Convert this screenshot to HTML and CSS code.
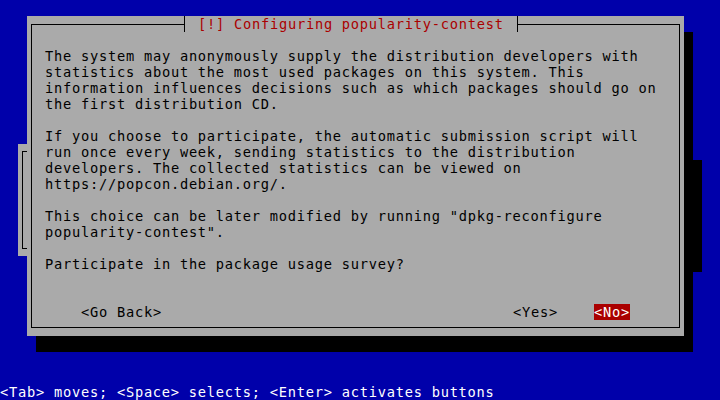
FILE: index.html
```html
<!DOCTYPE html>
<html lang="en">
<head>
<meta charset="utf-8">
<title>Configuring popularity-contest</title>
<link rel="stylesheet" href="styles.css">
</head>
<body>
<div class="screen">
  <div class="backbox"><div class="backframe"></div></div>
  <div class="dialog">
    <div class="frame">
      <div class="title"> [!] Configuring popularity-contest </div>
      <div class="content">
        <p>The system may anonymously supply the distribution developers with<br>statistics about the most used packages on this system. This<br>information influences decisions such as which packages should go on<br>the first distribution CD.</p>
        <p>If you choose to participate, the automatic submission script will<br>run once every week, sending statistics to the distribution<br>developers. The collected statistics can be viewed on<br>https://popcon.debian.org/.</p>
        <p>This choice can be later modified by running "dpkg-reconfigure<br>popularity-contest".</p>
        <p>Participate in the package usage survey?</p>
        <div class="buttons">
          <span class="btn">&lt;Go Back&gt;</span>
          <span class="btn btn-yes">&lt;Yes&gt;</span>
          <span class="btn btn-no">&lt;No&gt;</span>
        </div>
      </div>
    </div>
  </div>
  <div class="help">&lt;Tab&gt; moves; &lt;Space&gt; selects; &lt;Enter&gt; activates buttons</div>
</div>
</body>
</html>
```
FILE: styles.css
```css
html, body {
  margin: 0;
  padding: 0;
  background: #0000aa;
}

.screen {
  position: relative;
  width: 720px;
  height: 400px;
  background: #0000aa;
  display: flex;
  flex-direction: column;
  align-items: flex-start;
  padding: 16px 0 0 27px;
  box-sizing: border-box;
  font-family: "DejaVu Sans Mono", monospace;
  font-size: 13.7px;
  line-height: 16px;
  letter-spacing: 0.752px;
  overflow: hidden;
}

.backbox {
  position: absolute;
  left: 18px;
  top: 144px;
  width: 675px;
  height: 112px;
  background: #aaaaaa;
  box-shadow: 9px 16px 0 #000;
}

.backframe {
  position: absolute;
  left: 4px;
  top: 7px;
  width: 600px;
  height: 96px;
  border: 1px solid #000;
}

.dialog {
  position: relative;
  z-index: 1;
  width: 657px;
  height: 320px;
  box-sizing: border-box;
  padding: 8px 4px;
  background: #aaaaaa;
  box-shadow: 9px 16px 0 #000;
  color: #000;
}

.frame {
  position: relative;
  height: 100%;
  box-sizing: border-box;
  border: 1px solid #000;
}

.title {
  position: absolute;
  left: 152px;
  top: -9px;
  height: 16px;
  padding: 0 4px;
  border-left: 1px solid #000;
  border-right: 1px solid #000;
  background: #aaaaaa;
  color: #aa0000;
  white-space: pre;
}

.content {
  padding: 23px 49px 0 13px;
}

.content p {
  margin: 0 0 16px 0;
  white-space: nowrap;
}

.buttons {
  display: flex;
  padding-left: 36px;
  margin-top: 32px;
  white-space: pre;
}

.content p:last-of-type {
  margin-bottom: 0;
}

.btn-yes {
  margin-left: auto;
}

.btn-no {
  margin-left: 36px;
  background: #aa0000;
  color: #ffffff;
}

.help {
  margin-top: auto;
  margin-left: -27px;
  height: 16px;
  color: #ffffff;
  white-space: pre;
}
```
